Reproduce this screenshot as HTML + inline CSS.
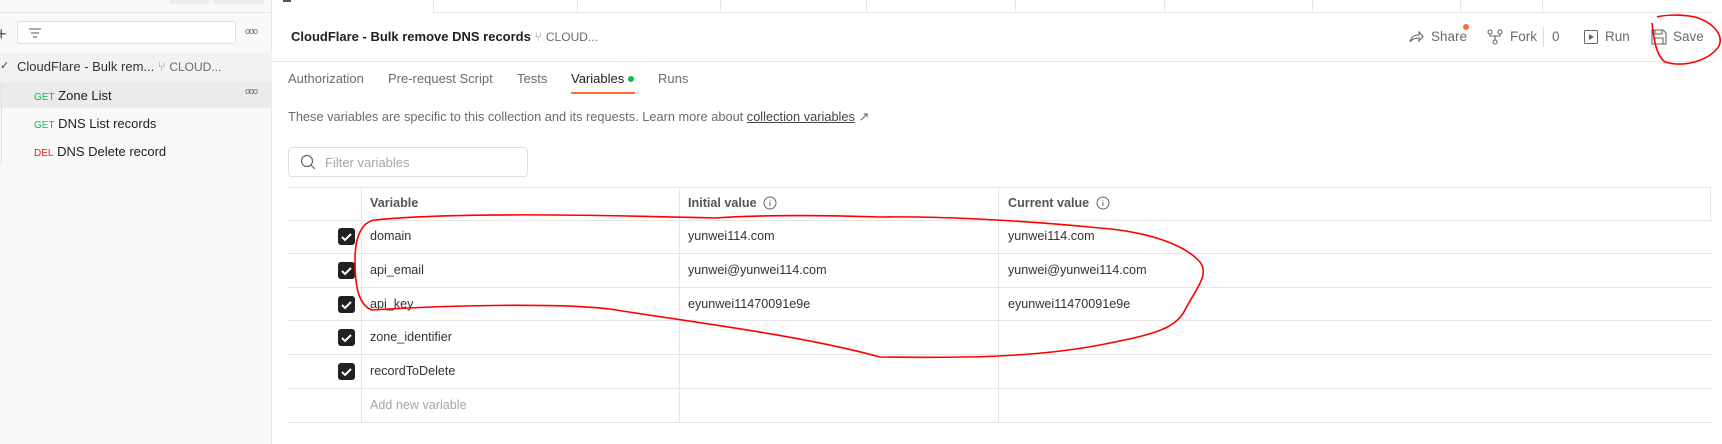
<!DOCTYPE html>
<html><head><meta charset="utf-8"><style>
*{margin:0;padding:0;box-sizing:border-box}
body{width:1722px;height:444px;overflow:hidden;background:#fff;font-family:"Liberation Sans",sans-serif;font-size:13px;color:#212121;position:relative}
.a{position:absolute;white-space:nowrap}
.g{color:#6b6b6b}
.hl{position:absolute;height:1px;background:#e6e6e6}
.vl{position:absolute;width:1px;background:#e6e6e6}
.cb{position:absolute;width:17px;height:17px;background:#212121;border-radius:3px}
.t{font-size:12.6px;color:#333}
</style></head><body>
<!-- sidebar -->
<div class="a" style="left:0;top:0;width:272px;height:444px;background:#f9f9f9;border-right:1px solid #e6e6e6"></div>
<div class="a" style="left:169px;top:0;width:40px;height:4px;background:#ececec;border-radius:0 0 3px 3px"></div>
<div class="a" style="left:213px;top:0;width:51px;height:4px;background:#ececec;border-radius:0 0 3px 3px"></div>
<div class="hl" style="left:0;top:12px;width:272px"></div>
<div class="a" style="left:-4px;top:24px;font-size:18px;color:#555">+</div>
<div class="a" style="left:17px;top:21px;width:219px;height:23px;border:1px solid #e0e0e0;border-radius:3px;background:#fff"></div>
<svg class="a" style="left:28px;top:27px" width="14" height="12"><path d="M1 2h12M3 6h8M5 10h4" stroke="#777" stroke-width="1.2"/></svg>
<div class="a g" style="left:245px;top:26px;font-size:9px;letter-spacing:-1px">ooo</div>
<div class="a" style="left:0;top:53px;width:272px;height:29px;background:#f2f2f2"></div>
<div class="a" style="left:0;top:82px;width:272px;height:26px;background:#ebebeb"></div>
<div class="a" style="left:0;top:59px;font-size:11px;color:#444">✓</div>
<div class="a" style="left:17px;top:59px;color:#333">CloudFlare - Bulk rem... <span style="color:#999">⑂</span> <span class="g" style="font-size:12px">CLOUD...</span></div>
<div class="vl" style="left:1px;top:82px;height:82px;background:#e0e0e0"></div>
<div class="a" style="left:34px;top:88px"><span style="color:#0cbb52;font-size:10px">GET</span> Zone List</div>
<div class="a g" style="left:245px;top:86px;font-size:9px;letter-spacing:-1px">ooo</div>
<div class="a" style="left:34px;top:116px"><span style="color:#0cbb52;font-size:10px">GET</span> DNS List records</div>
<div class="a" style="left:34px;top:144px"><span style="color:#eb2013;font-size:10px">DEL</span> DNS Delete record</div>
<!-- top strip -->
<div class="hl" style="left:433px;top:12px;width:1280px"></div>
<div class="vl" style="left:433px;top:0;height:12px"></div>
<div class="vl" style="left:577px;top:0;height:12px"></div>
<div class="vl" style="left:720px;top:0;height:12px"></div>
<div class="vl" style="left:866px;top:0;height:12px"></div>
<div class="vl" style="left:1015px;top:0;height:12px"></div>
<div class="vl" style="left:1164px;top:0;height:12px"></div>
<div class="vl" style="left:1312px;top:0;height:12px"></div>
<div class="vl" style="left:1460px;top:0;height:12px"></div>
<div class="vl" style="left:1542px;top:0;height:12px"></div>
<div class="a" style="left:283px;top:0;width:8px;height:2px;background:#555"></div>
<!-- header -->
<div class="a" style="left:291px;top:29px;font-size:13px;font-weight:bold">CloudFlare - Bulk remove DNS records <span style="color:#999;font-weight:normal">⑂</span> <span class="g" style="font-weight:normal;font-size:12px">CLOUD...</span></div>
<svg class="a" style="left:1408px;top:29px" width="16" height="15"><path d="M2 13c1-5 4-7 9-7V3l4 4.5-4 4.5V9c-4 0-7 1-9 4z" fill="none" stroke="#666" stroke-width="1.1"/></svg>
<div class="a g" style="left:1431px;top:29px;font-size:13.5px">Share</div>
<div class="a" style="left:1463px;top:24px;width:6px;height:6px;border-radius:50%;background:#ff6c37"></div>
<svg class="a" style="left:1487px;top:29px" width="16" height="16"><g fill="none" stroke="#666" stroke-width="1.1"><circle cx="3" cy="3" r="2"/><circle cx="13" cy="3" r="2"/><circle cx="8" cy="13" r="2"/><path d="M3 5v2h10V5M8 7v4"/></g></svg>
<div class="a g" style="left:1510px;top:29px;font-size:13.5px">Fork</div>
<div class="vl" style="left:1543px;top:27px;height:20px;background:#ddd"></div>
<div class="a g" style="left:1552px;top:29px;font-size:13.5px">0</div>
<svg class="a" style="left:1584px;top:30px" width="14" height="14"><rect x=".5" y=".5" width="13" height="13" rx="1" fill="none" stroke="#666"/><path d="M5 4l5 3-5 3z" fill="#666"/></svg>
<div class="a g" style="left:1605px;top:29px;font-size:13.5px">Run</div>
<svg class="a" style="left:1651px;top:29px" width="16" height="16"><path d="M1 1h11l3 3v11H1z M4 1v4h7V1 M4 15V9h8v6" fill="none" stroke="#666" stroke-width="1.1"/></svg>
<div class="a g" style="left:1673px;top:29px;font-size:13.5px">Save</div>
<div class="hl" style="left:272px;top:61px;width:1441px"></div>
<!-- tabs -->
<div class="a g" style="left:288px;top:71px">Authorization</div>
<div class="a g" style="left:388px;top:71px">Pre-request Script</div>
<div class="a g" style="left:517px;top:71px">Tests</div>
<div class="a" style="left:571px;top:71px;color:#212121">Variables</div>
<div class="a" style="left:628px;top:76px;width:6px;height:6px;border-radius:50%;background:#0cbb52"></div>
<div class="a" style="left:571px;top:92px;width:64px;height:2px;background:#ff6c37"></div>
<div class="a g" style="left:658px;top:71px">Runs</div>
<div class="a g" style="left:288px;top:109px;font-size:12.8px">These variables are specific to this collection and its requests. Learn more about <span style="text-decoration:underline;color:#444">collection variables</span> ↗</div>
<div class="a" style="left:288px;top:147px;width:240px;height:30px;border:1px solid #e0e0e0;border-radius:4px"></div>
<svg class="a" style="left:300px;top:154px" width="16" height="16"><circle cx="7" cy="7" r="5.5" fill="none" stroke="#666" stroke-width="1.2"/><path d="M11 11l4 4" stroke="#666" stroke-width="1.2"/></svg>
<div class="a" style="left:325px;top:155px;color:#a6a6a6">Filter variables</div>
<!-- table -->
<div class="hl" style="left:288px;top:187px;width:1423px"></div>
<div class="hl" style="left:288px;top:220px;width:1425px"></div>
<div class="hl" style="left:288px;top:253px;width:1425px"></div>
<div class="hl" style="left:288px;top:287px;width:1425px"></div>
<div class="hl" style="left:288px;top:320px;width:1425px"></div>
<div class="hl" style="left:288px;top:354px;width:1425px"></div>
<div class="hl" style="left:288px;top:388px;width:1425px"></div>
<div class="hl" style="left:288px;top:422px;width:1425px"></div>
<div class="vl" style="left:361px;top:187px;height:235px"></div>
<div class="vl" style="left:679px;top:187px;height:235px"></div>
<div class="vl" style="left:998px;top:187px;height:235px"></div>
<div class="vl" style="left:1710px;top:187px;height:33px"></div>
<div class="a" style="left:370px;top:196px;font-weight:bold;color:#555;font-size:12.6px">Variable</div>
<div class="a" style="left:688px;top:196px;font-weight:bold;color:#555;font-size:12.6px">Initial value</div>
<div class="a" style="left:1008px;top:196px;font-weight:bold;color:#555;font-size:12.6px">Current value</div>
<svg class="a" style="left:763px;top:196px" width="14" height="14"><circle cx="7" cy="7" r="6" fill="none" stroke="#666"/><path d="M7 6v4M7 4v.8" stroke="#666"/></svg>
<svg class="a" style="left:1096px;top:196px" width="14" height="14"><circle cx="7" cy="7" r="6" fill="none" stroke="#666"/><path d="M7 6v4M7 4v.8" stroke="#666"/></svg>
<div class="cb" style="left:338px;top:228px"></div>
<div class="cb" style="left:338px;top:262px"></div>
<div class="cb" style="left:338px;top:296px"></div>
<div class="cb" style="left:338px;top:329px"></div>
<div class="cb" style="left:338px;top:363px"></div>
<svg class="a" style="left:338px;top:228px" width="17" height="152"><g fill="none" stroke="#fff" stroke-width="2"><path d="M4 9l3 3 6-6"/><path d="M4 43l3 3 6-6"/><path d="M4 77l3 3 6-6"/><path d="M4 110l3 3 6-6"/><path d="M4 144l3 3 6-6"/></g></svg>
<div class="a t" style="left:370px;top:229px">domain</div>
<div class="a t" style="left:370px;top:263px">api_email</div>
<div class="a t" style="left:370px;top:297px">api_key</div>
<div class="a t" style="left:370px;top:330px">zone_identifier</div>
<div class="a t" style="left:370px;top:364px">recordToDelete</div>
<div class="a t" style="left:370px;top:398px;color:#a6a6a6">Add new variable</div>
<div class="a t" style="left:688px;top:229px">yunwei114.com</div>
<div class="a t" style="left:688px;top:263px">yunwei@yunwei114.com</div>
<div class="a t" style="left:688px;top:297px">eyunwei11470091e9e</div>
<div class="a t" style="left:1008px;top:229px">yunwei114.com</div>
<div class="a t" style="left:1008px;top:263px">yunwei@yunwei114.com</div>
<div class="a t" style="left:1008px;top:297px">eyunwei11470091e9e</div>
<!-- red annotations -->
<svg class="a" style="left:0;top:0" width="1722" height="444"><g fill="none" stroke="#f00" stroke-width="1.6">
<path d="M715 218C600 215 450 212 375 220C360 222 355 240 355 260C355 285 358 305 372 310C450 305 560 303 610 309C690 322 800 335 880 357C960 358 1030 358 1100 345C1150 335 1175 330 1185 310C1195 290 1210 275 1200 262C1185 245 1150 232 1100 228C1040 222 950 216 880 217C820 215 760 215 715 218"/>
<path d="M1652 23C1654 40 1656 55 1665 62C1685 68 1710 60 1719 46C1724 34 1712 22 1695 17C1680 14 1664 15 1657 17"/>
</g></svg>
</body></html>
